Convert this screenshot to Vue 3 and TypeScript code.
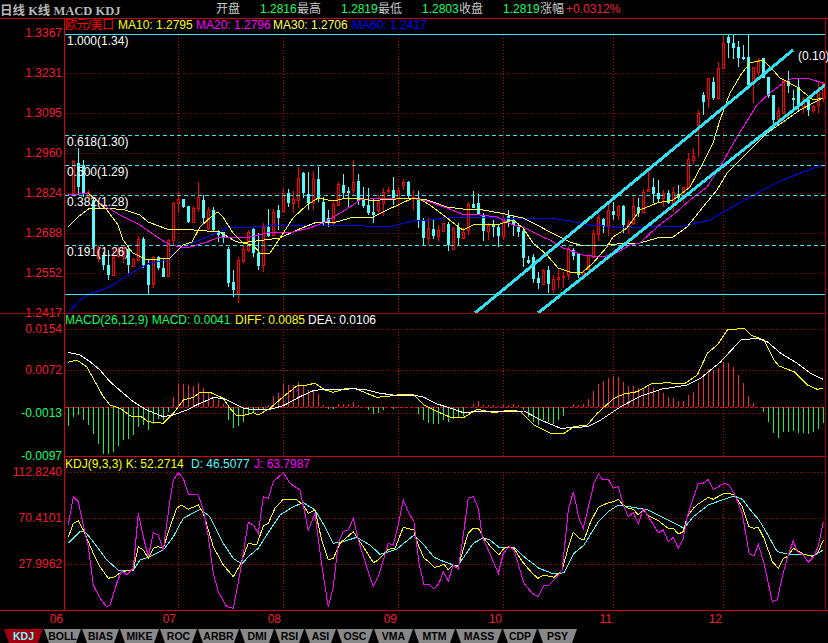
<script setup lang="ts">
interface Label { x: number; y: number; t: string; c: string; a?: string }
type Candle = [number, number, number, number, number]

// Flat [x, y, x, y, ...] traces read at 3x from an origin (ox, oy), mapped to page pixels.
const trace = (ox: number, oy: number, p: number[]): string => {
  const out: string[] = []
  for (let i = 0; i < p.length; i += 2) out.push(`${(ox + p[i] / 3).toFixed(1)},${(oy + p[i + 1] / 3).toFixed(1)}`)
  return out.join(' ')
}
const real = (p: number[]): string => trace(0, 0, p.map((v) => v * 3))

const quotes = [
  { name: '最高', value: '1.2816' },
  { name: '最低', value: '1.2819' },
  { name: '收盘', value: '1.2803' }
]

// high, low, bodyTop, bodyBottom, up(1)/down(0); first candle at x=73, 5px step
const candles: Candle[] = [
  [160,195,161,193,1],[148,195,163,187,0],[160,197,165,193,0],[190,198,192,197,1],[198,248,200,247,0],
  [245,262,247,258,1],[252,270,256,265,0],[250,280,265,275,0],[248,275,257,275,1],[247,258,249,256,1],
  [245,263,247,256,1],[245,273,249,265,0],[258,267,259,266,1],[236,260,239,260,1],[237,268,239,265,0],
  [260,295,265,285,0],[256,288,257,284,1],[256,270,257,268,0],[258,277,268,277,0],[239,276,240,276,1],
  [202,245,203,240,1],[192,213,199,203,1],[199,208,199,207,0],[206,223,206,222,0],[206,223,208,222,1],
  [182,212,197,208,1],[195,223,200,218,0],[207,230,210,228,1],[207,232,210,230,0],[230,242,231,235,0],
  [232,243,232,238,0],[247,287,249,283,0],[270,297,282,290,0],[257,303,260,293,1],[245,263,249,261,1],
  [230,252,232,250,1],[228,257,229,253,0],[233,270,253,266,0],[223,272,227,265,1],[209,237,227,236,0],
  [209,235,212,235,1],[205,230,210,218,0],[188,212,193,211,1],[189,207,193,203,0],[191,213,199,203,1],
  [167,208,178,200,1],[172,198,173,193,0],[172,210,194,203,0],[171,210,179,202,1],[167,202,179,198,0],
  [197,225,202,223,0],[210,227,218,223,0],[200,225,204,223,1],[182,205,184,205,1],[174,198,185,193,0],
  [187,207,191,193,0],[160,195,182,190,1],[174,205,181,201,0],[187,208,200,206,0],[188,215,205,213,0],
  [198,223,212,215,0],[195,215,202,210,1],[188,216,192,203,1],[187,193,190,191,1],[177,205,190,198,0],
  [187,207,190,198,1],[179,190,182,185,1],[181,198,182,196,0],[190,210,197,198,1],[191,228,200,220,0],
  [218,245,221,238,0],[218,245,228,238,1],[220,239,229,236,0],[225,242,230,236,1],[223,232,223,231,1],
  [222,251,224,245,0],[227,249,228,249,1],[223,245,227,238,0],[227,238,232,238,1],[202,235,204,230,1],
  [191,208,204,208,0],[194,215,203,215,0],[213,241,215,231,0],[223,240,225,231,1],[220,237,224,227,0],
  [224,247,227,236,0],[213,240,218,236,1],[210,227,216,222,0],[216,236,220,225,0],[223,237,227,232,0],
  [230,267,231,258,0],[256,264,260,263,0],[254,283,257,279,0],[272,289,278,283,0],[269,284,270,284,1],
  [266,293,270,284,0],[275,293,279,289,1],[270,288,277,279,1],[272,288,276,277,1],[247,280,248,275,1],
  [248,260,250,256,0],[253,278,254,275,0],[270,277,272,275,1],[254,270,255,269,1],[230,257,233,257,1],
  [215,241,217,234,1],[218,233,219,226,0],[204,236,210,225,1],[202,220,211,215,0],[205,220,206,215,1],
  [205,233,206,225,0],[220,234,223,226,1],[196,225,206,223,1],[198,217,207,213,0],[189,213,192,212,1],
  [170,192,189,191,1],[178,203,187,194,0],[180,203,193,199,0],[190,207,193,198,1],[190,204,193,203,0],
  [187,212,192,203,1],[185,200,194,198,0],[187,202,187,197,1],[153,188,159,187,1],[148,164,156,160,1],
  [110,157,113,125,1],[92,115,95,102,0],[78,108,78,98,1],[77,100,82,98,0],[62,100,68,98,1],
  [34,68,43,68,1],[34,58,37,43,0],[34,59,43,48,0],[41,67,47,58,0],[45,60,57,59,0],
  [34,85,57,85,0],[67,103,67,82,1],[58,77,60,72,1],[58,78,58,78,0],[77,98,77,96,0],
  [95,125,95,120,0],[107,125,111,119,1],[80,113,81,113,1],[71,93,81,86,0],[90,108,98,100,0],
  [79,110,87,105,0],[97,113,103,107,1],[98,116,100,110,0],[105,113,106,110,1],[82,113,90,105,1],
  [82,102,83,98,1]
]
const candleList = candles.map((c, i) => ({ x: 73 + 5 * i, hi: c[0], lo: c[1], top: c[2], bot: c[3], up: c[4] === 1 }))

const ma10 = real([88,193,107,210,118,225,123,240,133,253,147,260,160,259,170,258,183,245,192,242,200,227,213,215,218,212,223,217,233,233,243,243,253,245,260,253,270,253,280,238,293,218,307,205,318,198,333,201,347,198,360,198,373,201,380,200,412,198,418,198,430,205,447,218,463,230,473,225,487,224,500,224,513,220,523,228,533,243,547,255,558,268,570,272,583,272,593,263,607,247,613,237,627,228,640,210,657,203,673,200,690,187,703,163,713,143,720,120,730,93,742,73,750,63,763,60,773,70,780,78,797,87,807,95,813,100,823,98])
const ma30 = real([68,227,78,217,90,208,107,208,125,210,140,215,148,222,167,229,180,229,207,231,220,232,233,240,240,243,280,238,297,230,317,222,333,223,350,218,373,217,387,210,400,204,413,198,427,200,447,207,463,209,483,210,500,213,523,218,537,225,550,232,570,242,583,246,607,245,627,243,640,243,657,238,673,237,687,227,703,207,717,190,727,173,737,163,753,147,767,133,783,122,800,110,813,103,823,98])
const ma20 = real([68,195,88,193,100,203,120,215,140,225,157,237,170,245,187,248,207,242,220,237,240,238,250,237,267,233,293,232,310,228,323,223,337,215,350,207,360,200,380,198,410,198,427,201,447,208,462,214,480,215,497,217,513,225,523,227,543,237,550,240,563,248,583,255,600,257,613,255,630,245,640,243,657,227,673,215,690,200,707,187,720,167,737,137,757,105,770,93,783,83,793,78,810,79,823,83])
const ma60 = real([68,313,80,300,90,294,110,287,133,272,150,263,167,260,177,250,187,245,207,237,227,228,253,227,280,225,300,226,320,225,337,226,357,225,373,227,393,226,413,221,430,220,450,217,480,217,510,219,550,218,570,221,590,225,617,227,650,227,683,226,710,220,727,210,750,197,767,188,783,180,803,172,823,165])

const macdBars = [19,10,8,13,18,27,37,47,47,45,39,33,32,28,20,18,23,17,12,13,5,-10,-23,-23,-22,-21,-24,-19,-15,-8,-7,-3,13,21,19,15,7,5,3,2,-2,-11,-14,-23,-22,-22,-25,-22,-17,-17,-13,-2,2,2,-3,-3,-3,-5,-2,0,3,7,6,3,0,2,0,0,0,0,7,13,16,17,17,13,15,12,11,9,0,-3,-6,-2,-2,-2,-1,-2,-2,-3,-2,3,10,15,18,13,15,17,13,9,0,-3,-2,-3,-8,-16,-23,-26,-29,-31,-30,-25,-21,-21,-19,-19,-21,-19,-16,-14,-10,-9,-6,-6,-12,-15,-24,-33,-38,-37,-39,-45,-44,-40,-32,-24,-11,-4,0,5,15,26,31,25,25,24,26,26,27,25,22,16]
  .map((v, i) => ({ x: 68 + 5 * i, v }))

const dea = [
  trace(0,310,[205,127,240,135,270,155,300,180,330,215,370,250,400,275,440,300,490,320,520,315,560,300,600,280,640,263,670,265,700,280,730,295,770,300,810,298,850,287,900,260,940,242,970,238,1010,240,1060,236,1100,240,1140,250,1180,255,1242,255]),
  trace(414,310,[0,255,30,262,70,282,110,295,145,307,200,305,250,305,330,303,380,330,440,355,520,350,560,330,620,290,680,258,740,238,820,225,860,205,920,155,980,90,1030,85,1060,95,1100,130,1150,160,1190,190,1227,208])
]
const diff = [
  trace(0,310,[205,157,230,150,260,170,285,215,310,260,330,285,360,295,395,320,420,318,445,335,490,340,520,310,550,270,580,262,600,247,630,247,670,265,690,295,710,317,735,315,760,308,775,315,810,295,850,260,890,228,920,225,945,220,975,240,1000,247,1040,235,1070,237,1100,250,1130,262,1170,258,1210,252,1242,255]),
  trace(414,310,[0,255,30,285,70,305,110,322,150,322,190,298,240,308,290,300,320,305,360,345,410,370,450,370,480,350,520,345,550,310,600,265,630,252,670,245,710,222,760,218,810,222,850,195,880,130,910,105,940,60,990,55,1010,75,1050,90,1080,150,1095,168,1140,185,1180,225,1210,238,1227,235])
]
const kdjJ = [
  trace(0,450,[205,225,220,140,235,155,250,225,265,290,280,405,300,445,320,470,330,465,350,400,365,362,380,375,400,355,415,190,430,260,445,320,460,248,475,255,490,300,510,150,520,90,535,68,550,85,565,133,595,135,610,180,625,260,640,370,655,425,680,470,700,475,720,370,745,217,760,225,775,250,790,140,805,145,820,95,850,68,870,100,900,120,925,240,945,190,965,345,985,470,1000,410,1015,280,1030,245,1045,240,1060,205,1075,270,1100,350,1120,410,1135,380,1165,280,1180,285,1195,225,1210,150,1225,185,1242,215]),
  trace(414,450,[0,220,15,340,30,405,45,403,60,418,75,400,88,365,103,393,118,345,133,358,150,240,163,145,178,140,193,175,205,260,225,305,253,370,268,310,285,290,300,300,330,400,355,430,372,440,390,405,405,405,430,380,445,358,463,180,478,125,495,205,508,235,540,100,553,72,568,90,583,88,598,115,613,110,628,165,643,200,658,188,673,222,688,175,703,200,733,248,748,240,763,275,778,262,793,295,808,265,820,200,838,145,853,100,868,100,883,88,898,118,913,110,930,100,945,105,960,130,985,190,1005,310,1020,318,1033,283,1050,340,1075,455,1090,450,1105,380,1120,325,1138,272,1150,305,1168,315,1183,337,1198,322,1213,290,1228,215])
]
const kdjK = [
  trace(0,450,[205,262,220,220,235,213,250,240,280,310,300,350,325,385,345,380,365,365,400,360,415,290,430,300,445,325,460,295,475,290,490,295,510,230,530,175,545,165,565,178,595,165,610,190,640,290,670,345,700,380,720,345,745,280,770,285,790,228,805,220,825,175,850,148,890,150,910,165,925,190,945,180,965,270,985,330,1000,325,1020,280,1060,245,1090,290,1120,338,1135,330,1165,298,1185,295,1210,232,1242,240]),
  trace(414,450,[0,245,15,290,30,325,45,335,60,352,75,350,90,342,103,360,118,345,133,350,150,290,163,250,178,235,193,235,208,262,230,290,255,315,270,295,285,290,300,295,325,335,355,370,372,385,390,375,420,382,445,360,463,290,478,247,495,265,510,270,530,215,553,172,583,158,598,155,613,148,628,165,643,175,658,178,673,195,688,180,703,197,733,212,763,235,778,235,793,252,808,245,820,200,838,175,853,162,883,142,898,148,930,130,945,130,960,135,985,170,1005,230,1020,235,1033,232,1050,265,1075,335,1093,355,1108,325,1120,320,1138,295,1168,312,1198,320,1213,305,1228,270])
]
const kdjD = [
  trace(0,450,[205,280,240,245,255,245,280,275,320,330,355,360,400,360,420,330,445,322,490,300,520,260,550,205,600,178,630,200,670,280,700,325,725,342,745,320,775,295,800,255,840,195,880,170,910,158,945,180,975,230,1000,280,1030,275,1070,262,1110,285,1140,313,1190,298,1242,255]),
  trace(414,450,[0,255,30,285,60,322,90,335,118,345,133,345,150,320,178,280,205,265,225,268,255,292,300,292,330,320,375,355,420,372,450,368,480,310,510,285,553,215,583,185,613,165,658,172,703,180,763,210,810,235,838,200,883,165,930,148,960,138,985,148,1005,175,1035,210,1050,235,1090,305,1120,312,1168,313,1198,318,1228,300])
]

const vGrid = [178, 283, 398, 503, 613, 723]
const AXIS = '#f41c30'
const GREEN = '#18ff60'

const mainAxis = [['1.3367',33],['1.3231',73],['1.3095',113],['1.2960',153],['1.2824',193],['1.2688',233],['1.2552',273],['1.2417',313]] as const
const mainGrid = [73, 113, 153, 193, 233, 273]
const fibDashed = [135, 165, 195, 245]
const fibSolid = [34, 294]
const mainLabels: Label[] = [
  { x: 118, y: 25, t: 'MA10: 1.2795', c: '#ffff00' },
  { x: 196, y: 25, t: 'MA20: 1.2796', c: '#ff00ff' },
  { x: 273, y: 25, t: 'MA30: 1.2706', c: '#ffff60' },
  { x: 352, y: 25, t: 'MA60: 1.2417', c: '#0000ff' },
  { x: 67, y: 41, t: '1.000(1.34)', c: '#ffffff' },
  { x: 67, y: 142, t: '0.618(1.30)', c: '#ffffff' },
  { x: 67, y: 172, t: '0.500(1.29)', c: '#ffffff' },
  { x: 67, y: 202, t: '0.382(1.28)', c: '#ffffff' },
  { x: 67, y: 252, t: '0.191(1.26)', c: '#ffffff' },
  { x: 798, y: 56, t: '(0.10)', c: '#ffffff' }
]
const macdAxis = [
  { t: '0.0154', y: 329, c: AXIS }, { t: '0.0072', y: 370, c: AXIS },
  { t: '-0.0013', y: 413, c: GREEN }, { t: '-0.0097', y: 456, c: GREEN }
]
const macdLabels: Label[] = [
  { x: 65, y: 320, t: 'MACD(26,12,9)  MACD: 0.0041', c: GREEN },
  { x: 235, y: 320, t: 'DIFF: 0.0085', c: '#ffff00' },
  { x: 308, y: 320, t: 'DEA: 0.0106', c: '#ffffff' }
]
const kdjAxis = [['112.8240', 472], ['70.4101', 518], ['27.9962', 564]] as const
const kdjLabels: Label[] = [
  { x: 65, y: 464, t: 'KDJ(9,3,3)  K: 52.2714', c: '#ffff00' },
  { x: 191, y: 464, t: 'D: 46.5077', c: '#54fcfc' },
  { x: 254, y: 464, t: 'J: 63.7987', c: '#ff00ff' }
]
const months = [['06', 63], ['07', 176], ['08', 281], ['09', 397], ['10', 502], ['11', 612], ['12', 722]] as const
const tabs = [
  ['KDJ',39],['BOLL',37],['BIAS',37],['MIKE',39],['ROC',37],['ARBR',41],['DMI',34],['RSI',29],
  ['ASI',31],['OSC',36],['VMA',39],['MTM',41],['MASS',46],['CDP',34],['PSY',39]
] as const
</script>

<template>
  <div class="page">
    <header class="quote-bar">
      <strong class="title">日线 K线 MACD KDJ</strong>
      <div class="quotes">
        <span class="q-name first">开盘</span>
        <span v-for="q in quotes" :key="q.name" class="quote">
          <span class="q-value">{{ q.value }}</span><span class="q-name">{{ q.name }}</span>
        </span>
        <span class="q-value">1.2819</span><span class="q-name">涨幅</span><span class="q-change">+0.0312%</span>
      </div>
    </header>

    <section class="panel main-panel">
      <svg class="chart" width="828" height="295" viewBox="0 18 828 295">
        <line v-for="y in mainGrid" :key="y" x1="65" x2="825" :y1="y" :y2="y" class="hgrid dim" />
        <line v-for="x in vGrid" :key="x" :x1="x" :x2="x" y1="35" y2="313" class="vgrid" />
        <g v-for="c in candleList" :key="c.x">
          <template v-if="c.up">
            <line :x1="c.x + 0.5" :x2="c.x + 0.5" :y1="c.hi" :y2="c.top" class="wick-r" />
            <line :x1="c.x + 0.5" :x2="c.x + 0.5" :y1="c.bot" :y2="c.lo" class="wick-r" />
            <rect :x="c.x - 0.5" :y="c.top + 0.5" width="2" :height="Math.max(c.bot - c.top, 1)" class="body-r" />
          </template>
          <template v-else>
            <line :x1="c.x + 0.5" :x2="c.x + 0.5" :y1="c.hi" :y2="c.lo" class="wick-c" />
            <rect :x="c.x - 1" :y="c.top" width="3" :height="Math.max(c.bot - c.top, 1)" class="body-c" />
          </template>
        </g>
        <polyline :points="ma60" class="ln" stroke="#0000ff" />
        <polyline :points="ma30" class="ln" stroke="#ffff60" />
        <polyline :points="ma20" class="ln" stroke="#ff00ff" />
        <polyline :points="ma10" class="ln" stroke="#ffff00" />
        <line v-for="y in fibSolid" :key="y" x1="65" x2="825" :y1="y + 0.5" :y2="y + 0.5" class="fib" />
        <line v-for="y in fibDashed" :key="y" x1="65" x2="825" :y1="y + 0.5" :y2="y + 0.5" class="fib dash" />
        <line x1="475" y1="313" x2="793" y2="50" class="trend" />
        <line x1="538" y1="313" x2="825" y2="85" class="trend" />
        <text v-for="a in mainAxis" :key="a[0]" x="62" :y="a[1] + 4" class="txt" text-anchor="end" :fill="AXIS">{{ a[0] }}</text>
        <text x="65" y="29" class="txt pair" fill="#ff0000">欧元/美口</text>
        <text v-for="l in mainLabels" :key="l.t" :x="l.x" :y="l.y + 4" class="txt" :fill="l.c">{{ l.t }}</text>
      </svg>
    </section>

    <section class="panel macd-panel">
      <svg class="chart" width="828" height="143" viewBox="0 313 828 143">
        <line x1="0" x2="825" y1="313.5" y2="313.5" class="rule dark" />
        <line v-for="y in [329, 370, 413]" :key="y" x1="65" x2="825" :y1="y + 0.5" :y2="y + 0.5" class="hgrid" />
        <line v-for="x in vGrid" :key="x" :x1="x" :x2="x" y1="329" y2="456" class="vgrid" />
        <line v-for="b in macdBars" :key="b.x" :x1="b.x + 0.5" :x2="b.x + 0.5" y1="407" :y2="407 + b.v" class="bar" :class="b.v < 0 ? 'bar-up' : 'bar-down'" />
        <line x1="65" x2="825" y1="407" y2="407" class="zero" />
        <polyline v-for="(p, i) in diff" :key="i" :points="p" class="ln" stroke="#ffff00" />
        <polyline v-for="(p, i) in dea" :key="i" :points="p" class="ln" stroke="#ffffff" />
        <text v-for="a in macdAxis" :key="a.t" x="62" :y="a.y + 4" class="txt" text-anchor="end" :fill="a.c">{{ a.t }}</text>
        <text v-for="l in macdLabels" :key="l.t" :x="l.x" :y="l.y + 4" class="txt" :fill="l.c" xml:space="preserve">{{ l.t }}</text>
      </svg>
    </section>

    <section class="panel kdj-panel">
      <svg class="chart" width="828" height="154" viewBox="0 456 828 154">
        <line x1="64" x2="825" y1="456.5" y2="456.5" class="rule" />
        <line v-for="y in [472, 518, 564]" :key="y" x1="65" x2="825" :y1="y + 0.5" :y2="y + 0.5" class="hgrid" />
        <line v-for="x in vGrid" :key="x" :x1="x" :x2="x" y1="472" y2="610" class="vgrid" />
        <polyline v-for="(p, i) in kdjD" :key="i" :points="p" class="ln" stroke="#54fcfc" />
        <polyline v-for="(p, i) in kdjK" :key="i" :points="p" class="ln" stroke="#ffff00" />
        <polyline v-for="(p, i) in kdjJ" :key="i" :points="p" class="ln" stroke="#ff00ff" />
        <text v-for="a in kdjAxis" :key="a[0]" x="62" :y="a[1] + 4" class="txt" text-anchor="end" :fill="AXIS">{{ a[0] }}</text>
        <text v-for="l in kdjLabels" :key="l.t" :x="l.x" :y="l.y + 4" class="txt" :fill="l.c" xml:space="preserve">{{ l.t }}</text>
      </svg>
    </section>

    <div class="x-axis">
      <svg width="828" height="19" viewBox="0 610 828 19" class="chart">
        <text v-for="m in months" :key="m[0]" :x="m[1]" y="623" class="txt" text-anchor="end" :fill="AXIS">{{ m[0] }}</text>
      </svg>
    </div>

    <nav class="tabs">
      <span v-for="(t, i) in tabs" :key="t[0]" class="tab" :class="{ active: i === 0 }" :style="{ width: t[1] + 'px' }">{{ t[0] }}</span>
    </nav>

    <i class="frame-v left" />
    <i class="frame-v right" />
  </div>
</template>

<style>
html, body { margin: 0; background: #000; }
</style>

<style scoped>
.page {
  position: relative;
  width: 828px;
  height: 643px;
  background: #000;
  overflow: hidden;
  display: flex;
  flex-direction: column;
  font-family: "Liberation Sans", "Noto Sans CJK SC", sans-serif;
}
.quote-bar {
  height: 19px;
  box-sizing: border-box;
  border-bottom: 1px solid #c80010;
  display: flex;
  align-items: center;
  flex: none;
  margin-bottom: -1px;
}
.title {
  width: 216px;
  flex: none;
  color: #b8b8b8;
  font: bold 12.5px "Liberation Serif", "Noto Sans CJK SC", serif;
  white-space: nowrap;
}
.quotes {
  display: flex;
  align-items: baseline;
  font-size: 12px;
  line-height: 14px;
  white-space: nowrap;
}
.quote { display: inline-flex; align-items: baseline; margin-right: 20px; }
.q-name { color: #c8c8c8; width: 24px; flex: none; }
.q-name.first { margin-right: 20px; }
.q-value { color: #18ff60; width: 37px; flex: none; }
.q-change { color: #f41c40; margin-left: 2px; }
.panel { flex: none; }
.chart { display: block; overflow: visible; }
.txt { font: 12px "Liberation Sans", "Noto Sans CJK SC", sans-serif; }
.pair { letter-spacing: -0.6px; }
.hgrid { stroke: #b00010; stroke-width: 1; stroke-dasharray: 1 2; shape-rendering: crispEdges; }
.hgrid.dim { stroke: #90000c; }
.vgrid { stroke: #c80010; stroke-width: 1; stroke-dasharray: 1 2; shape-rendering: crispEdges; }
.wick-r { stroke: #ff0000; stroke-width: 1; shape-rendering: crispEdges; }
.body-r { fill: #000; stroke: #ff0000; stroke-width: 1; shape-rendering: crispEdges; }
.wick-c { stroke: #54fcfc; stroke-width: 1; shape-rendering: crispEdges; }
.body-c { fill: #54fcfc; shape-rendering: crispEdges; }
.ln { fill: none; stroke-width: 1; shape-rendering: crispEdges; }
.fib { stroke: #30e8f0; stroke-width: 1; shape-rendering: crispEdges; }
.fib.dash { stroke-dasharray: 4 3; }
.trend { stroke: #30e0f4; stroke-width: 3; shape-rendering: crispEdges; }
.rule { stroke: #c80010; stroke-width: 1; shape-rendering: crispEdges; }
.rule.dark { stroke: #a00008; }
.bar { stroke-width: 1; shape-rendering: crispEdges; }
.bar-up { stroke: #f82838; }
.bar-down { stroke: #18f050; }
.zero { stroke: #ff0010; stroke-width: 1; stroke-dasharray: 3 2; shape-rendering: crispEdges; }
.x-axis {
  height: 19px;
  flex: none;
  box-sizing: border-box;
  border-top: 1px solid #d80010;
}
.x-axis .chart { margin-top: -1px; }
.tabs {
  display: flex;
  gap: 1px;
  height: 14px;
  padding-left: 4px;
  flex: none;
}
.tab {
  flex: none;
  box-sizing: border-box;
  height: 14px;
  background: #888888;
  color: #000;
  font-size: 10.5px;
  font-weight: bold;
  line-height: 14px;
  text-align: center;
  clip-path: polygon(0 0, 100% 0, calc(100% - 5px) 100%, 5px 100%);
}
.tab.active { background: #a00010; color: #6ffcff; }
.frame-v {
  position: absolute;
  top: 18px;
  bottom: 33px;
  width: 1px;
}
.frame-v.left { left: 64px; background: #d80010; }
.frame-v.right { left: 825px; background: #a00008; }
</style>
